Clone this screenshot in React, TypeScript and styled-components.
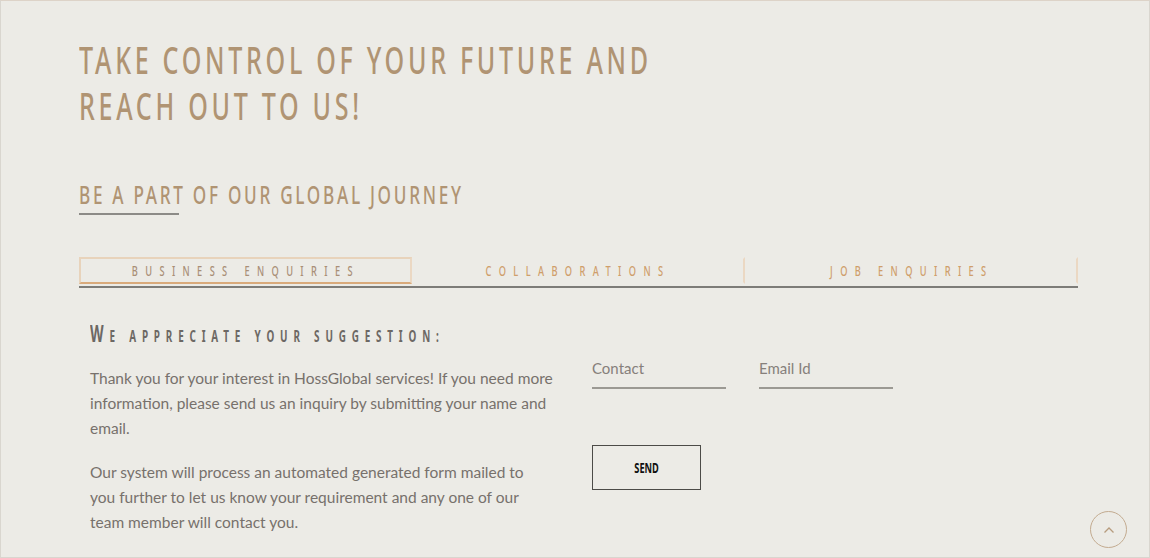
import React from "react";
import styled, { createGlobalStyle } from "styled-components";

const Global = createGlobalStyle`
  html, body { margin: 0; padding: 0; background: #ecebe6; }
  * { box-sizing: border-box; }
`;

const Page = styled.div`
  position: relative;
  width: 1150px;
  height: 558px;
  background: #ecebe6;
  border: 1px solid #d9d6cf;
  border-top-color: #ddd3c8;
  overflow: hidden;
  padding: 36px 72px 0 78px;
`;

const Title = styled.h1`
  margin: 0;
  font-family: "Noto Sans", sans-serif;
  font-weight: 500;
  font-size: 38px;
  line-height: 45.5px;
  letter-spacing: 5.6px;
  color: #b09473;
  white-space: nowrap;
  transform: scaleX(0.66);
  transform-origin: left top;
`;

const Subtitle = styled.h2`
  margin: 49px 0 0;
  font-family: "Noto Sans", sans-serif;
  font-weight: 500;
  font-size: 26px;
  line-height: 34px;
  letter-spacing: 4.1px;
  color: #b09473;
  white-space: nowrap;
  transform: scaleX(0.66);
  transform-origin: left top;
`;

const Underline = styled.div`
  margin-top: 2px;
  width: 100px;
  height: 2px;
  background: #8c8b87;
`;

const Tabs = styled.div`
  margin-top: 42px;
  width: 999px;
  display: grid;
  grid-template-columns: repeat(3, minmax(0, 1fr));
  border-bottom: 2px solid #7d7c78;
`;

const Tab = styled.div<{ $active?: boolean }>`
  height: 27px;
  min-width: 0;
  display: flex;
  align-items: center;
  justify-content: center;
  overflow: visible;
  border: 2px solid ${(p) => (p.$active ? "#e8d3bb" : "transparent")};
  border-right-color: #ebd8c3;
  border-bottom-color: ${(p) => (p.$active ? "#d9aa7b" : "transparent")};
  margin-bottom: ${(p) => (p.$active ? "0" : "2px")};
`;

const TabLabel = styled.span<{ $active?: boolean }>`
  display: inline-block;
  flex: none;
  font-family: "Noto Sans", sans-serif;
  font-weight: 500;
  font-size: 14px;
  letter-spacing: 11.2px;
  white-space: nowrap;
  color: ${(p) => (p.$active ? "#a98f77" : "#cf9e6b")};
  transform: scaleX(0.66);
  transform-origin: center;
`;

const Content = styled.div`
  display: grid;
  grid-template-columns: 502px 1fr;
  padding-left: 11px;
  margin-top: 33px;
`;

const Left = styled.div``;

const Heading = styled.h3`
  margin: 0 0 18px;
  font-family: "Noto Sans", sans-serif;
  font-weight: 700;
  font-size: 16.5px;
  text-transform: uppercase;
  line-height: 24px;
  letter-spacing: 9.7px;
  color: #6c6864;
  white-space: nowrap;
  transform: scaleX(0.6);
  transform-origin: left center;
  &::first-letter {
    font-size: 23.5px;
  }
`;

const Para = styled.p`
  margin: 0 0 19px;
  width: 500px;
  font-family: Lato, sans-serif;
  font-size: 15.5px;
  line-height: 25px;
  color: #77716c;
`;

const Right = styled.div`
  padding-top: 39px;
`;

const Fields = styled.div`
  display: flex;
  gap: 33px;
`;

const Field = styled.div`
  width: 134px;
  border-bottom: 2px solid #9b9993;
  padding-bottom: 10px;
  font-family: Lato, sans-serif;
  font-size: 15px;
  line-height: 17px;
  color: #86807b;
`;

const SendButton = styled.button`
  margin-top: 56px;
  width: 109px;
  height: 45px;
  background: transparent;
  border: 1px solid #4c4b48;
  display: flex;
  align-items: center;
  justify-content: center;
  cursor: pointer;
  padding: 0;
`;

const SendLabel = styled.span`
  display: inline-block;
  font-family: "Noto Sans", sans-serif;
  font-weight: 700;
  font-size: 14px;
  color: #111;
  transform: scaleX(0.66);
`;

const ScrollTop = styled.div`
  position: absolute;
  right: 22px;
  bottom: 9px;
  width: 37px;
  height: 37px;
  border-radius: 50%;
  border: 1px solid #c3ab90;
  display: flex;
  align-items: center;
  justify-content: center;
`;

export default function App() {
  return (
    <>
      <Global />
      <Page>
        <Title>
          TAKE CONTROL OF YOUR FUTURE AND
          <br />
          REACH OUT TO US!
        </Title>
        <Subtitle>BE A PART OF OUR GLOBAL JOURNEY</Subtitle>
        <Underline />
        <Tabs>
          <Tab $active>
            <TabLabel $active>BUSINESS ENQUIRIES</TabLabel>
          </Tab>
          <Tab>
            <TabLabel>COLLABORATIONS</TabLabel>
          </Tab>
          <Tab>
            <TabLabel>JOB ENQUIRIES</TabLabel>
          </Tab>
        </Tabs>
        <Content>
          <Left>
            <Heading>We appreciate your suggestion:</Heading>
            <Para>
              Thank you for your interest in HossGlobal services! If you need more
              <br />
              information, please send us an inquiry by submitting your name and
              <br />
              email.
            </Para>
            <Para>
              Our system will process an automated generated form mailed to
              <br />
              you further to let us know your requirement and any one of our
              <br />
              team member will contact you.
            </Para>
          </Left>
          <Right>
            <Fields>
              <Field>Contact</Field>
              <Field>Email Id</Field>
            </Fields>
            <SendButton>
              <SendLabel>SEND</SendLabel>
            </SendButton>
          </Right>
        </Content>
        <ScrollTop>
          <svg width="12" height="8" viewBox="0 0 12 8" fill="none">
            <path d="M1.5 6.5 L6 2 L10.5 6.5" stroke="#b79c7e" strokeWidth="1.3" />
          </svg>
        </ScrollTop>
      </Page>
    </>
  );
}
